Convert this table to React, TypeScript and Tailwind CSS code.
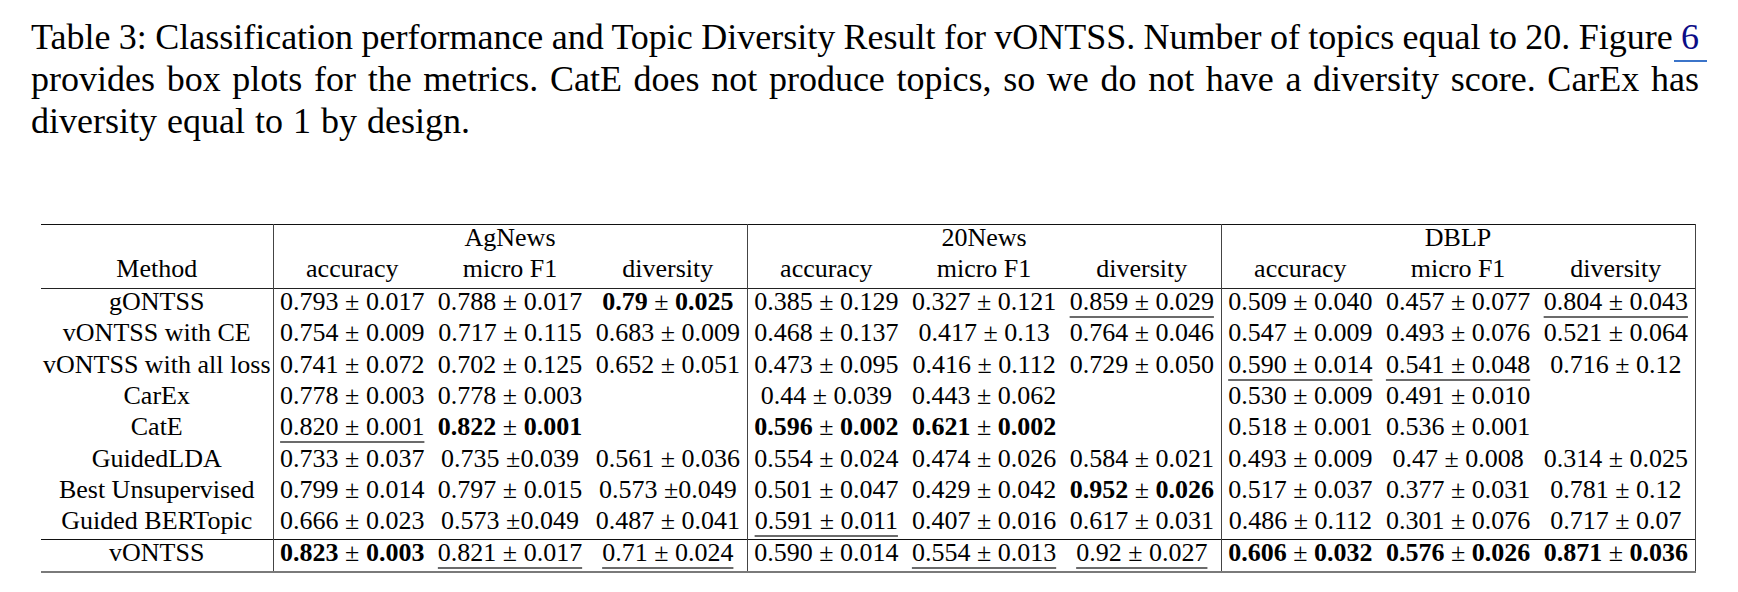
import React from 'react';

type Cell = string;

// '*' prefix = bold (best), '_' prefix = underlined (second best)
const rows: { method: string; cells: Cell[]; last?: boolean }[] = [
  {
    method: 'gONTSS',
    cells: ['0.793 ± 0.017', '0.788 ± 0.017', '*0.79 ± 0.025', '0.385 ± 0.129', '0.327 ± 0.121', '_0.859 ± 0.029', '0.509 ± 0.040', '0.457 ± 0.077', '_0.804 ± 0.043'],
  },
  {
    method: 'vONTSS with CE',
    cells: ['0.754 ± 0.009', '0.717 ± 0.115', '0.683 ± 0.009', '0.468 ± 0.137', '0.417 ± 0.13', '0.764 ± 0.046', '0.547 ± 0.009', '0.493 ± 0.076', '0.521 ± 0.064'],
  },
  {
    method: 'vONTSS with all loss',
    cells: ['0.741 ± 0.072', '0.702 ± 0.125', '0.652 ± 0.051', '0.473 ± 0.095', '0.416 ± 0.112', '0.729 ± 0.050', '_0.590 ± 0.014', '_0.541 ± 0.048', '0.716 ± 0.12'],
  },
  {
    method: 'CarEx',
    cells: ['0.778 ± 0.003', '0.778 ± 0.003', '', '0.44 ± 0.039', '0.443 ± 0.062', '', '0.530 ± 0.009', '0.491 ± 0.010', ''],
  },
  {
    method: 'CatE',
    cells: ['_0.820 ± 0.001', '*0.822 ± 0.001', '', '*0.596 ± 0.002', '*0.621 ± 0.002', '', '0.518 ± 0.001', '0.536 ± 0.001', ''],
  },
  {
    method: 'GuidedLDA',
    cells: ['0.733 ± 0.037', '0.735 ±0.039', '0.561 ± 0.036', '0.554 ± 0.024', '0.474 ± 0.026', '0.584 ± 0.021', '0.493 ± 0.009', '0.47 ± 0.008', '0.314 ± 0.025'],
  },
  {
    method: 'Best Unsupervised',
    cells: ['0.799 ± 0.014', '0.797 ± 0.015', '0.573 ±0.049', '0.501 ± 0.047', '0.429 ± 0.042', '*0.952 ± 0.026', '0.517 ± 0.037', '0.377 ± 0.031', '0.781 ± 0.12'],
  },
  {
    method: 'Guided BERTopic',
    cells: ['0.666 ± 0.023', '0.573 ±0.049', '0.487 ± 0.041', '_0.591 ± 0.011', '0.407 ± 0.016', '0.617 ± 0.031', '0.486 ± 0.112', '0.301 ± 0.076', '0.717 ± 0.07'],
  },
  {
    method: 'vONTSS',
    cells: ['*0.823 ± 0.003', '_0.821 ± 0.017', '_0.71 ± 0.024', '0.590 ± 0.014', '_0.554 ± 0.013', '_0.92 ± 0.027', '*0.606 ± 0.032', '*0.576 ± 0.026', '*0.871 ± 0.036'],
    last: true,
  },
];

const datasets = ['AgNews', '20News', 'DBLP'];
const metrics = ['accuracy', 'micro F1', 'diversity'];

function Value({ raw }: { raw: Cell }) {
  if (!raw) return null;
  if (raw.startsWith('*')) {
    // bold digits, the ± itself stays regular
    const [a, b] = raw.slice(1).split('±');
    return (
      <span>
        <b className="font-bold">{a}</b>±<b className="font-bold">{b}</b>
      </span>
    );
  }
  if (raw.startsWith('_')) {
    return (
      <span className="underline decoration-[#6b6b6b] decoration-[1.5px] underline-offset-[6px]">
        {raw.slice(1)}
      </span>
    );
  }
  return <span>{raw}</span>;
}

export default function App() {
  return (
    <div className="w-[1738px] h-[592px] bg-white text-black font-['Liberation_Serif','Times_New_Roman',serif] overflow-hidden">
      {/* Caption */}
      <div className="ml-[31px] w-[1668px] pt-[16px] text-[36px] leading-[42px]">
        <p className="whitespace-nowrap text-justify [text-align-last:justify] [word-spacing:-5px]">
          Table 3: Classification performance and Topic Diversity Result for vONTSS. Number of topics equal to 20. Figure{' '}
          <span className="relative text-[#0c0c86]">
            6
            <span className="absolute left-[-7px] right-[-8px] top-[43px] h-[2px] bg-[#3b74c9]" />
          </span>
        </p>
        <p className="whitespace-nowrap text-justify [text-align-last:justify] [word-spacing:-5px]">
          provides box plots for the metrics. CatE does not produce topics, so we do not have a diversity score. CarEx has
        </p>
        <p className="whitespace-nowrap [word-spacing:1px]">diversity equal to 1 by design.</p>
      </div>

      {/* Table */}
      <table className="mt-[82px] ml-[41px] w-[1654px] table-fixed border-collapse text-[26px] leading-[26px]">
        <colgroup>
          <col className="w-[232px]" />
          {Array.from({ length: 9 }).map((_, i) => (
            <col key={i} className="w-[158px]" />
          ))}
        </colgroup>
        <thead>
          <tr className="h-[30px] border-t border-[#111]">
            <th className="font-normal" />
            {datasets.map((d) => (
              <th key={d} colSpan={3} className="font-normal text-center pb-[3px] border-l border-r border-[#444]">
                {d}
              </th>
            ))}
          </tr>
          <tr className="h-[34px] border-b border-[#222]">
            <th className="font-normal text-center pb-[4px]">Method</th>
            {datasets.map((d) =>
              metrics.map((m, j) => (
                <th
                  key={d + m}
                  className={`font-normal text-center pb-[4px] ${j === 0 ? 'border-l border-[#444]' : ''} ${j === 2 ? 'border-r border-[#444]' : ''}`}
                >
                  {m}
                </th>
              ))
            )}
          </tr>
        </thead>
        <tbody>
          {rows.map((r) => (
            <tr
              key={r.method}
              className={
                r.last
                  ? 'h-[31px] border-t border-[#111] border-b-2 border-b-[#7a7a7a]'
                  : 'h-[31.4px]'
              }
            >
              <td className="text-center whitespace-nowrap pb-[5px] px-0">{r.method}</td>
              {r.cells.map((c, i) => (
                <td
                  key={i}
                  className={`text-center whitespace-nowrap pb-[5px] px-0 ${i % 3 === 0 ? 'border-l border-[#444]' : ''} ${i % 3 === 2 ? 'border-r border-[#444]' : ''}`}
                >
                  <Value raw={c} />
                </td>
              ))}
            </tr>
          ))}
        </tbody>
      </table>
    </div>
  );
}
